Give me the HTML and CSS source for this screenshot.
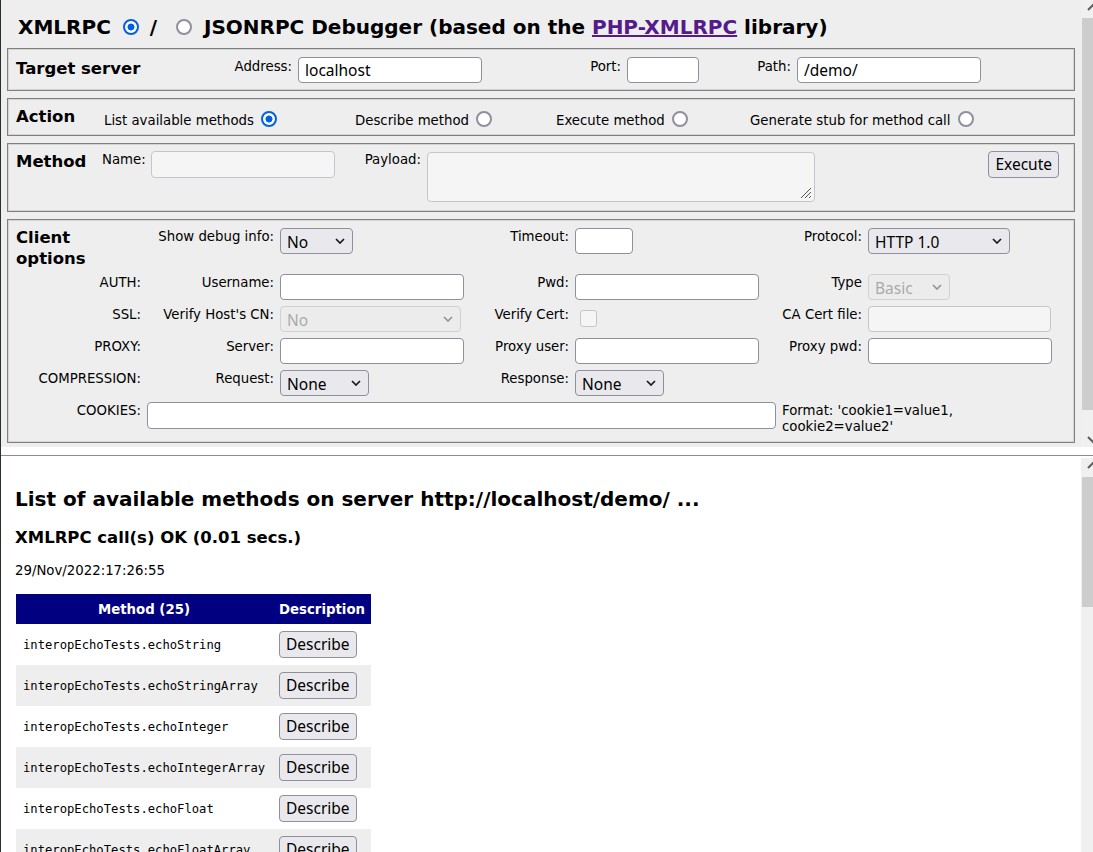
FILE: index.html
```html
<!DOCTYPE html>
<html lang="en">
<head>
<meta charset="utf-8">
<title>XMLRPC Debugger</title>
<link rel="stylesheet" href="styles.css">
</head>
<body>
<div class="window">
  <div class="frame frame-top">
    <div class="frame-body">
      <h1 class="title">XMLRPC <input type="radio" class="radio" name="api" checked> / <input type="radio" class="radio radio-json" name="api"> JSONRPC Debugger (based on the <a href="#" class="lib-link">PHP-XMLRPC</a> library)</h1>
      <form class="debug-form">
        <div class="box box-target">
          <div class="box-title">Target server</div>
          <label class="lbl">Address:</label>
          <input class="field w184" type="text" value="localhost">
          <label class="lbl">Port:</label>
          <input class="field w72" type="text">
          <label class="lbl">Path:</label>
          <input class="field w184" type="text" value="/demo/">
        </div>

        <div class="box box-action">
          <div class="box-title">Action</div>
          <label class="opt">List available methods <input type="radio" class="radio" name="action" checked></label>
          <label class="opt">Describe method <input type="radio" class="radio" name="action"></label>
          <label class="opt">Execute method <input type="radio" class="radio" name="action"></label>
          <label class="opt">Generate stub for method call <input type="radio" class="radio" name="action"></label>
        </div>

        <div class="box box-method">
          <div class="box-title">Method</div>
          <label class="lbl lbl-left">Name:</label>
          <input class="field w184 h27 is-disabled" type="text" disabled>
          <label class="lbl">Payload:</label>
          <div class="textarea-wrap">
            <textarea class="payload is-disabled" disabled></textarea>
            <svg class="grip" width="12" height="12" viewBox="0 0 12 12"><path d="M11 1 L1 11 M11 5 L5 11 M11 9 L9 11" stroke="#555" stroke-width="1" fill="none"/></svg>
          </div>
          <button type="button" class="btn btn-exec">Execute</button>
        </div>

        <div class="box box-client">
          <div class="box-title">Client<br>options</div>
          <label class="lbl">Show debug info:</label>
          <span class="select-wrap w73"><select class="select"><option>No</option></select><svg class="chev" width="10" height="6" viewBox="0 0 10 6"><polyline points="1,1 5,5 9,1"/></svg></span>
          <label class="lbl">Timeout:</label>
          <input class="field w58" type="text">
          <label class="lbl">Protocol:</label>
          <span class="select-wrap w142"><select class="select"><option>HTTP 1.0</option></select><svg class="chev" width="10" height="6" viewBox="0 0 10 6"><polyline points="1,1 5,5 9,1"/></svg></span>

          <span class="lbl">AUTH:</span>
          <label class="lbl">Username:</label>
          <input class="field w184" type="text">
          <label class="lbl">Pwd:</label>
          <input class="field w184" type="password">
          <label class="lbl">Type</label>
          <span class="select-wrap w82 is-disabled"><select class="select" disabled><option>Basic</option></select><svg class="chev" width="10" height="6" viewBox="0 0 10 6"><polyline points="1,1 5,5 9,1"/></svg></span>

          <span class="lbl">SSL:</span>
          <label class="lbl">Verify Host's CN:</label>
          <span class="select-wrap w181 is-disabled"><select class="select" disabled><option>No</option></select><svg class="chev" width="10" height="6" viewBox="0 0 10 6"><polyline points="1,1 5,5 9,1"/></svg></span>
          <label class="lbl">Verify Cert:</label>
          <input class="check is-disabled" type="checkbox" disabled>
          <label class="lbl">CA Cert file:</label>
          <input class="field w183 is-disabled" type="text" disabled>

          <span class="lbl">PROXY:</span>
          <label class="lbl">Server:</label>
          <input class="field w184" type="text">
          <label class="lbl">Proxy user:</label>
          <input class="field w184" type="text">
          <label class="lbl">Proxy pwd:</label>
          <input class="field w184" type="password">

          <span class="lbl">COMPRESSION:</span>
          <label class="lbl">Request:</label>
          <span class="select-wrap w89"><select class="select"><option>None</option></select><svg class="chev" width="10" height="6" viewBox="0 0 10 6"><polyline points="1,1 5,5 9,1"/></svg></span>
          <label class="lbl">Response:</label>
          <span class="select-wrap w89"><select class="select"><option>None</option></select><svg class="chev" width="10" height="6" viewBox="0 0 10 6"><polyline points="1,1 5,5 9,1"/></svg></span>
          <span class="empty"></span>
          <span class="empty"></span>

          <span class="lbl">COOKIES:</span>
          <input class="field cookies h27" type="text">
          <span class="format-hint">Format: 'cookie1=value1, cookie2=value2'</span>
        </div>
      </form>
    </div>
    <div class="scrollbar sb-top">
      <svg class="sb-arrow" width="12" height="14" viewBox="0 0 12 14"><polyline points="7,10 12,5 17,10"/></svg>
      <div class="sb-track"><div class="sb-thumb"></div></div>
      <svg class="sb-arrow" width="12" height="14" viewBox="0 0 12 14"><polyline points="7,4 12,9 17,4"/></svg>
    </div>
  </div>

  <div class="frame-gap"></div>

  <div class="frame frame-bottom">
    <div class="frame-body result">
      <h2 class="result-title">List of available methods on server http://localhost/demo/ ...</h2>
      <h3 class="result-status">XMLRPC call(s) OK (0.01 secs.)</h3>
      <p class="result-date">29/Nov/2022:17:26:55</p>
      <table class="methods">
        <thead>
          <tr><th class="col-method">Method (25)</th><th class="col-desc">Description</th></tr>
        </thead>
        <tbody>
          <tr><td class="mname">interopEchoTests.echoString</td><td class="mact"><button type="button" class="btn">Describe</button></td></tr>
          <tr><td class="mname">interopEchoTests.echoStringArray</td><td class="mact"><button type="button" class="btn">Describe</button></td></tr>
          <tr><td class="mname">interopEchoTests.echoInteger</td><td class="mact"><button type="button" class="btn">Describe</button></td></tr>
          <tr><td class="mname">interopEchoTests.echoIntegerArray</td><td class="mact"><button type="button" class="btn">Describe</button></td></tr>
          <tr><td class="mname">interopEchoTests.echoFloat</td><td class="mact"><button type="button" class="btn">Describe</button></td></tr>
          <tr><td class="mname">interopEchoTests.echoFloatArray</td><td class="mact"><button type="button" class="btn">Describe</button></td></tr>
          <tr><td class="mname">interopEchoTests.echoStruct</td><td class="mact"><button type="button" class="btn">Describe</button></td></tr>
          <tr><td class="mname">interopEchoTests.echoStructArray</td><td class="mact"><button type="button" class="btn">Describe</button></td></tr>
        </tbody>
      </table>
    </div>
    <div class="scrollbar sb-bottom">
      <svg class="sb-arrow" width="12" height="14" viewBox="0 0 12 14"><polyline points="7,10 12,5 17,10"/></svg>
      <div class="sb-track"><div class="sb-thumb"></div></div>
    </div>
  </div>
</div>
</body>
</html>
```

FILE: styles.css
```css
* { box-sizing: border-box; }

html, body {
  margin: 0;
  padding: 0;
  background: #fff;
}

body {
  font-family: "DejaVu Sans", Verdana, sans-serif;
  font-size: 13.3px;
  color: #000;
  overflow: hidden;
}

.window {
  width: 1093px;
  height: 852px;
  display: flex;
  flex-direction: column;
  border-left: 1px solid #27312a;
  overflow: hidden;
}

.frame {
  display: flex;
  min-height: 0;
}

.frame-top {
  height: 447px;
  flex: none;
  background: #eeeeee;
}

.frame-gap {
  height: 9px;
  flex: none;
  background: #fff;
  border-bottom: 1px solid #8c8c8c;
}

.frame-bottom {
  flex: 1;
  background: #fff;
}

.frame-body {
  flex: 1;
  min-width: 0;
  overflow: hidden;
}

.frame-top .frame-body {
  padding: 0 6px;
}

/* ---------- title ---------- */
.title {
  margin: 0 0 9px;
  padding: 15px 0 0 11px;
  font-size: 20px;
  line-height: 24px;
  height: 39px;
  font-weight: bold;
  white-space: nowrap;
}

.lib-link {
  color: #551a8b;
  text-decoration: underline;
}

/* ---------- radio / checkbox ---------- */
.radio {
  appearance: none;
  -webkit-appearance: none;
  width: 16px;
  height: 16px;
  margin: 0 3px 0 3px;
  border: 2px solid #8f8f9d;
  border-radius: 50%;
  background: #fff;
  vertical-align: -2px;
}

.radio:checked {
  border-color: #0060df;
  background: radial-gradient(circle, #0060df 0 3.2px, #fff 3.8px);
}

.title .radio {
  margin: 0 4px 0 5px;
  vertical-align: -1px;
}

.title .radio-json {
  margin: 0 5px 0 12px;
}

.check {
  appearance: none;
  -webkit-appearance: none;
  width: 17px;
  height: 17px;
  margin: 4px 0 0 5px;
  border: 1px solid #8f8f9d;
  border-radius: 3px;
  background: #fff;
  justify-self: start;
}

/* ---------- boxes ---------- */
.box {
  border: 1px solid #808080;
  box-shadow: inset 0 0 0 1px #d4d4d4;
  background: #eeeeee;
  display: grid;
  column-gap: 6px;
  align-items: start;
  margin-bottom: 7px;
}

.box > * { justify-self: start; }

.box-title {
  font-weight: bold;
  font-size: 16.5px;
  line-height: 20px;
  padding-top: 1px;
}

.lbl {
  justify-self: end;
  text-align: right;
  line-height: 16px;
  padding-top: 1px;
  white-space: nowrap;
}

.lbl-left { justify-self: start; }

.box-target {
  height: 43px;
  padding: 8px 8px 7px;
  grid-template-columns: 140px 130px 184px 133px 72px 86px 184px;
}
.box-target .box-title { padding-top: 2px; }
.box-target .lbl { padding-top: 2px; }

.box-action {
  height: 38px;
  padding: 7px 8px;
  grid-template-columns: 82px 245px 195px 188px auto;
}
.box-action .box-title { line-height: 22px; padding-top: 0; height: 22px; }
.opt {
  height: 22px;
  line-height: 18px;
  padding-top: 5px;
  white-space: nowrap;
}
.opt .radio { vertical-align: -2px; }

.box-method {
  height: 69px;
  padding: 7px 8px 9px;
  grid-template-columns: 80px 43px 184px 80px 388px 1fr;
}

.box-client {
  height: 224px;
  padding: 8px 8px 8px;
  margin-bottom: 0;
  row-gap: 6px;
  grid-template-columns: 125px 127px 184px 99px 201px 80px 184px;
  grid-template-rows: 40px 26px 26px 26px 26px 32px;
}
.box-client .box-title { line-height: 20.5px; padding-top: 0; height: 40px; }

.cookies {
  grid-column: 2 / span 4;
  width: 629px;
}

.format-hint {
  grid-column: 6 / span 2;
  line-height: 16px;
  padding-top: 1px;
}

/* ---------- form controls ---------- */
.field, .select, .btn, .payload {
  font-family: "Noto Sans", "Open Sans", sans-serif;
  font-size: 15.5px;
  color: #000;
}

.field {
  height: 26px;
  padding: 0 6px;
  border: 1px solid #8f8f9d;
  border-radius: 4px;
  background: #fff;
  outline: none;
}

.h27 { height: 27px; }

.w58 { width: 58px; }
.w72 { width: 72px; }
.w73 { width: 73px; }
.w82 { width: 82px; }
.w89 { width: 89px; }
.w142 { width: 142px; }
.w181 { width: 181px; }
.w183 { width: 183px; }
.w184 { width: 184px; }

.is-disabled { opacity: 0.42; }

.select-wrap {
  position: relative;
  display: inline-block;
  height: 26px;
}

.select {
  appearance: none;
  -webkit-appearance: none;
  width: 100%;
  height: 26px;
  padding: 2px 22px 0 6px;
  border: 1px solid #8f8f9d;
  border-radius: 4px;
  background: #e9e9ed;
}

.chev {
  position: absolute;
  right: 8px;
  top: 10px;
  fill: none;
  stroke: #1a1a1a;
  stroke-width: 1.7;
  pointer-events: none;
}

.textarea-wrap {
  position: relative;
  width: 388px;
  height: 50px;
  margin-top: 1px;
}

.payload {
  display: block;
  width: 100%;
  height: 100%;
  border: 1px solid #8f8f9d;
  border-radius: 4px;
  background: #fff;
  resize: none;
}

.grip {
  position: absolute;
  right: 3px;
  bottom: 3px;
}

.btn {
  height: 27px;
  padding: 0 6px;
  border: 1px solid #8f8f9d;
  border-radius: 4px;
  background: #e9e9ed;
  line-height: 23px;
}

.btn-exec {
  justify-self: end;
  margin-right: 7px;
}

/* ---------- scrollbars ---------- */
.scrollbar {
  width: 12px;
  flex: none;
  display: flex;
  flex-direction: column;
  background: #f0f0f0;
  overflow: hidden;
}

.sb-arrow {
  flex: none;
  fill: none;
  stroke: #5f5f5f;
  stroke-width: 2;
  overflow: hidden;
}

.sb-track {
  flex: 1;
  min-height: 0;
}

.sb-thumb {
  margin-left: 1px;
  background: #cdcdcd;
}

.sb-top .sb-track { padding-top: 4px; }
.sb-top .sb-thumb { height: 392px; }

.sb-bottom { margin-top: 2px; }
.sb-bottom .sb-track { padding-top: 5px; }
.sb-bottom .sb-thumb { height: 130px; }

/* ---------- results ---------- */
.result {
  padding-left: 14px;
}

.result-title {
  margin: 31px 0 0;
  font-size: 20px;
  line-height: 24px;
  font-weight: bold;
  white-space: nowrap;
}

.result-status {
  margin: 17px 0 0;
  font-size: 16.5px;
  line-height: 20px;
  font-weight: bold;
}

.result-date {
  margin: 15px 0 0;
  line-height: 16px;
}

.methods {
  margin: 15px 0 0 1px;
  border-collapse: collapse;
  width: 355px;
}

.methods th {
  height: 30px;
  padding: 0;
  background: #000080;
  color: #fff;
  font-weight: bold;
  font-size: 13.3px;
}

.methods .col-method { width: 256px; text-align: center; }
.methods .col-desc { width: 99px; text-align: left; padding-left: 7px; }

.methods td {
  height: 41px;
  padding: 0 0 0 7px;
  vertical-align: middle;
}

.methods tbody tr:nth-child(even) td { background: #eeeeee; }

.mname {
  font-family: "DejaVu Sans Mono", "Liberation Mono", monospace;
  font-size: 12.2px;
}
```
